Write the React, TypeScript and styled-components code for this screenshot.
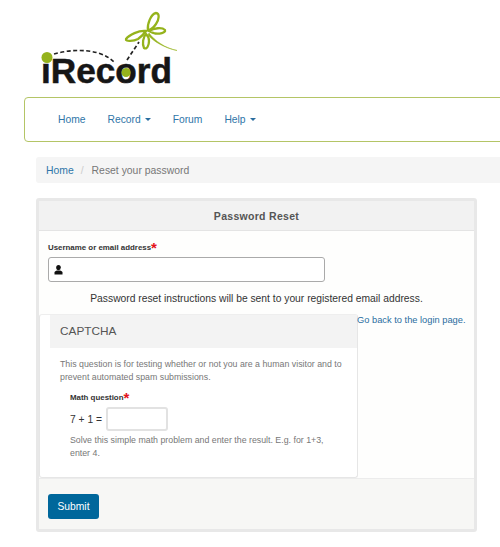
import React from "react";
import styled, { createGlobalStyle } from "styled-components";

const Global = createGlobalStyle`
  html, body { margin: 0; padding: 0; background: #fff; overflow: hidden; }
  body { font-family: "Liberation Sans", Arial, sans-serif; color: #333; }
  * { box-sizing: border-box; }
`;
const Page = styled.div`
  width: 500px; height: 547px; overflow: hidden; display: flex; flex-direction: column;
`;
const LogoLink = styled.a`
  display: block; width: 190px; height: 97px; margin-left: 20px; flex: none;
`;
const LogoWord = styled.text`
  font-family: "Liberation Sans", Arial, sans-serif; font-weight: 700; font-size: 35px; fill: #161616;
  stroke: #161616; stroke-width: .5px;
`;
const NavBar = styled.nav`
  flex: none; width: 560px; height: 45px; margin-left: 24px; padding: 1px 0 0 33px;
  display: flex; align-items: center; gap: 22px;
  border: 1px solid #b4c566; border-radius: 4px;
`;
const NavLink = styled.a`
  font-size: 10.3px; color: #2f75a8; display: flex; align-items: center; gap: 4px; line-height: 1;
`;
const Caret = styled.span`
  width: 0; height: 0; border-left: 3px solid transparent; border-right: 3px solid transparent;
  border-top: 3px solid #2a6d9f;
`;
const Crumbs = styled.ol`
  flex: none; list-style: none; margin: 15px 0 0 36px; padding: 0 0 0 10px; width: 500px; height: 26px;
  display: flex; align-items: center; background: #f5f5f5; border-radius: 3px;
  font-size: 10.4px; color: #777;
`;
const CrumbLink = styled.a` color: #2f75a8; `;
const CrumbSep = styled.span` color: #ccc; margin: 0 8px 0 7px; `;
const Card = styled.section`
  flex: none; margin: 15px 0 0 36px; width: 441px; height: 334px;
  border: 3px solid #e8e8e8; border-radius: 3px; background: #fff;
  display: flex; flex-direction: column;
`;
const CardHead = styled.h2`
  flex: none; margin: 0; height: 30px; background: #f2f2f2; border-bottom: 1px solid #e4e4e4;
  display: flex; align-items: center; justify-content: center;
  font-size: 10.5px; font-weight: 700; color: #555; letter-spacing: .3px;
`;
const CardBody = styled.div`
  flex: none; height: 247px; background: #fefefd; padding: 12px 0 0 9px; display: flex; flex-direction: column;
`;
const Label = styled.label`
  display: block; font-size: 7.9px; font-weight: 700; color: #333; line-height: 10px; height: 14px;
`;
const Star = styled.span`
  color: #e3131b; font-size: 15px; font-weight: 700; line-height: 9px; vertical-align: top;
`;
const InputWrap = styled.div`
  width: 277px; height: 25px; border: 1px solid #aaa; border-radius: 3px; background: #fff;
  display: flex; align-items: center; padding-left: 5px; flex: none;
`;
const Notice = styled.p`
  margin: 10px 0 0 -9px; text-align: center; font-size: 10.3px; color: #333; line-height: 14px; height: 14px; flex: none;
`;
const Row = styled.div` display: flex; align-items: flex-start; margin: 8px 0 0 -9px; flex: none; `;
const Fieldset = styled.fieldset`
  margin: 0; padding: 0; width: 319px; height: 164px; background: #fff;
  border: 1px solid #e6e6e6; border-top-color: #eee; border-radius: 3px; flex: none;
  display: flex; flex-direction: column;
`;
const Legend = styled.div`
  flex: none; margin-left: 10px; height: 33px; background: #f3f3f3; padding: 0 0 2px 10px;
  display: flex; align-items: center; font-size: 11.8px; color: #555;
`;
const Help = styled.p`
  margin: 0; font-size: 8.8px; line-height: 12.5px; color: #777;
`;
const Intro = styled(Help)` margin: 10px 8px 0 20px; `;
const MathBlock = styled.div` padding: 0 0 0 30px; margin-top: 10px; `;
const MathLabel = styled(Label)``;
const MathRow = styled.div` display: flex; align-items: center; gap: 4px; font-size: 10.3px; color: #333; `;
const MathInput = styled.div`
  width: 62px; height: 24px; border: 2px solid #e2e2e2; border-radius: 3px; background: #fff;
`;
const Solve = styled(Help)` margin-top: 3px; width: 262px; `;
const BackLink = styled.a`
  font-size: 9.3px; color: #2a6d9f; line-height: 12px; white-space: nowrap; margin: 0 0 0 -1px;
`;
const Footer = styled.div`
  flex: 1; min-height: 0; background: #f7f7f5; padding: 15px 0 0 9px; border-top: 1px solid #ececec;
`;
const Submit = styled.button`
  display: block; width: 51px; height: 25px; border: 0; border-radius: 3px; background: #00679b; color: #fff; padding: 0;
  font: 400 10.3px "Liberation Sans", Arial, sans-serif;
`;

const Logo = () => (
  <svg width="190" height="97" viewBox="20 0 190 97">
    <path d="M54 54 C68 50 85 49 98 53 C105 55 110 58 114 62" fill="none" stroke="#222" strokeWidth="1.6" strokeDasharray="4 2.5" />
    <path d="M127 60 L139 42" fill="none" stroke="#222" strokeWidth="1.7" strokeDasharray="4 2.5" />
    <LogoWord x="41" y="83" textLength="131" lengthAdjust="spacingAndGlyphs">iRecord</LogoWord>
    <circle cx="47" cy="57.5" r="5.5" fill="#95b31c" />
    <circle cx="126" cy="72.5" r="4.6" fill="#95b31c" />
    <g fill="none" stroke="#95b31c" strokeWidth="2.3">
      <path d="M148 30 C147 24 151 14 156 13 C160 13 159 20 156 24 C154 27 151 30 148 30 Z" />
      <path d="M149 31 C154 28 162 27 165 30 C166 33 159 34 155 33.5 C153 33 151 32 149 31 Z" />
      <path d="M146 31 C139 30 129 35 126 39 C125 42 134 41 138 39 C141 37 144 34 146 31 Z" />
      <path d="M146 34 C143 37 142 44 144 48 C147 50 149 45 149 41 C149 38 148 36 146 34 Z" />
    </g>
    <path d="M149 33 C155 41 165 48 177 50.5 C164 48 153 41 148 35 Z" fill="#95b31c" stroke="#95b31c" strokeWidth=".5" />
  </svg>
);

const UserIcon = () => (
  <svg width="9" height="10" viewBox="0 0 9 10">
    <ellipse cx="4.5" cy="2.6" rx="2.3" ry="2.6" fill="#111" />
    <path d="M0.5 9.5 V7.6 C0.5 6.2 2 5.6 3 5.4 H6 C7 5.6 8.5 6.2 8.5 7.6 V9.5 Z" fill="#111" />
  </svg>
);

export default function App() {
  return (
    <Page>
      <Global />
      <LogoLink><Logo /></LogoLink>
      <NavBar>
        <NavLink>Home</NavLink>
        <NavLink>Record <Caret /></NavLink>
        <NavLink>Forum</NavLink>
        <NavLink>Help <Caret /></NavLink>
      </NavBar>
      <Crumbs>
        <li><CrumbLink>Home</CrumbLink><CrumbSep>/</CrumbSep></li>
        <li>Reset your password</li>
      </Crumbs>
      <Card>
        <CardHead>Password Reset</CardHead>
        <CardBody>
          <Label>Username or email address<Star>*</Star></Label>
          <InputWrap><UserIcon /></InputWrap>
          <Notice>Password reset instructions will be sent to your registered email address.</Notice>
          <Row>
            <Fieldset>
              <Legend>CAPTCHA</Legend>
              <Intro>This question is for testing whether or not you are a human visitor and to prevent automated spam submissions.</Intro>
              <MathBlock>
                <MathLabel>Math question<Star>*</Star></MathLabel>
                <MathRow>7 + 1 = <MathInput /></MathRow>
                <Solve>Solve this simple math problem and enter the result. E.g. for 1+3, enter 4.</Solve>
              </MathBlock>
            </Fieldset>
            <BackLink>Go back to the login page.</BackLink>
          </Row>
        </CardBody>
        <Footer><Submit>Submit</Submit></Footer>
      </Card>
    </Page>
  );
}
